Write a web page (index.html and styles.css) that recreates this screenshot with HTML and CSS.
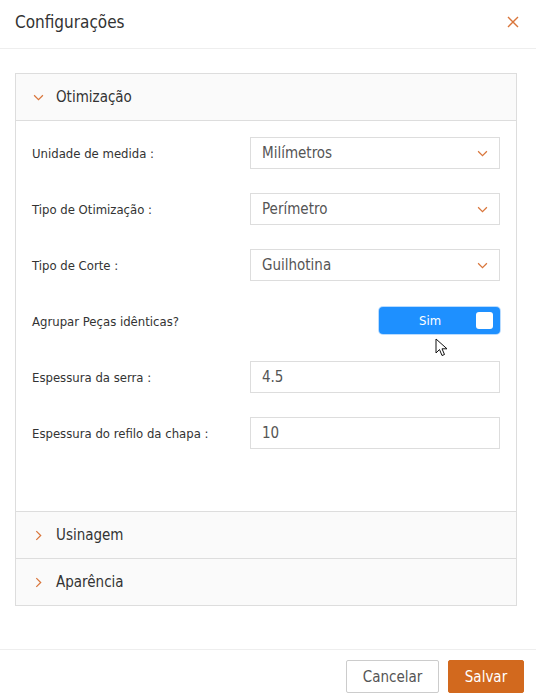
FILE: index.html
```html
<!DOCTYPE html>
<html lang="pt">
<head>
<meta charset="utf-8">
<link rel="stylesheet" href="styles.css">
</head>
<body>
<div class="modal">
  <header class="modal-header">
    <h1 class="title">Configurações</h1>
    <button class="close" aria-label="Fechar">
      <svg width="12" height="12" viewBox="0 0 12 12"><path d="M1 1L11 11M11 1L1 11" stroke="#d9753a" stroke-width="1.4" fill="none"/></svg>
    </button>
  </header>
  <main class="modal-body">
    <div class="accordion">
      <section class="panel open">
        <div class="panel-head">
          <svg class="chev" width="11" height="11" viewBox="0 0 10 10"><path d="M1 3L5 7L9 3" stroke="#d9753a" stroke-width="1.1" fill="none"/></svg>
          <span>Otimização</span>
        </div>
        <div class="panel-body">
          <div class="row">
            <label class="lbl">Unidade de medida :</label>
            <div class="field select"><span>Milímetros</span><svg width="11" height="11" viewBox="0 0 10 10"><path d="M1 3L5 7L9 3" stroke="#d9753a" stroke-width="1.1" fill="none"/></svg></div>
          </div>
          <div class="row">
            <label class="lbl">Tipo de Otimização :</label>
            <div class="field select"><span>Perímetro</span><svg width="11" height="11" viewBox="0 0 10 10"><path d="M1 3L5 7L9 3" stroke="#d9753a" stroke-width="1.1" fill="none"/></svg></div>
          </div>
          <div class="row">
            <label class="lbl">Tipo de Corte :</label>
            <div class="field select"><span>Guilhotina</span><svg width="11" height="11" viewBox="0 0 10 10"><path d="M1 3L5 7L9 3" stroke="#d9753a" stroke-width="1.1" fill="none"/></svg></div>
          </div>
          <div class="row">
            <label class="lbl">Agrupar Peças idênticas?</label>
            <div class="toggle-wrap">
              <div class="toggle"><span class="toggle-text">Sim</span><span class="knob"></span></div>
              <svg class="cursor" width="14" height="20" viewBox="0 0 14 20"><path d="M1 1L1 15L4.5 11.5L7 17.5L9.5 16.5L7 10.8L12 10.8Z" fill="#fff" stroke="#111" stroke-width="1" stroke-linejoin="round"/></svg>
            </div>
          </div>
          <div class="row">
            <label class="lbl">Espessura da serra :</label>
            <div class="field"><span>4.5</span></div>
          </div>
          <div class="row">
            <label class="lbl">Espessura do refilo da chapa :</label>
            <div class="field"><span>10</span></div>
          </div>
        </div>
      </section>
      <section class="panel">
        <div class="panel-head">
          <svg class="chev" width="11" height="11" viewBox="0 0 10 10"><path d="M3 1L7 5L3 9" stroke="#d9753a" stroke-width="1.1" fill="none"/></svg>
          <span>Usinagem</span>
        </div>
      </section>
      <section class="panel">
        <div class="panel-head">
          <svg class="chev" width="11" height="11" viewBox="0 0 10 10"><path d="M3 1L7 5L3 9" stroke="#d9753a" stroke-width="1.1" fill="none"/></svg>
          <span>Aparência</span>
        </div>
      </section>
    </div>
  </main>
  <footer class="modal-footer">
    <button class="btn btn-default">Cancelar</button>
    <button class="btn btn-primary">Salvar</button>
  </footer>
</div>
</body>
</html>
```

FILE: styles.css
```css
* { box-sizing: border-box; }
html, body { margin: 0; padding: 0; background: #fff; }
body {
  font-family: "DejaVu Sans Condensed", "DejaVu Sans", sans-serif;
  color: #333;
  width: 536px;
  height: 698px;
}
.modal { display: flex; flex-direction: column; height: 698px; }
.modal-header {
  height: 49px;
  border-bottom: 1px solid #eee;
  display: flex;
  align-items: center;
  justify-content: space-between;
  padding: 0 17px 5px 15px;
}
.title { margin: 0; font-size: 17px; font-weight: normal; color: #333; }
.close { border: 0; background: none; padding: 0; width: 12px; height: 12px; display: flex; }
.modal-body { flex: 1; padding: 24px 19px 0 15px; }
.accordion { border: 1px solid #ddd; }
.panel + .panel { border-top: 1px solid #ddd; }
.panel-head {
  height: 46px;
  background: #fafafa;
  display: flex;
  align-items: center;
  padding-left: 17px;
  font-size: 15px;
  color: #333;
}
.panel-head .chev { margin-right: 12px; }
.panel.open .panel-head { height: 47px; border-bottom: 1px solid #ddd; }
.panel-body { padding: 16px 16px 62px 16px; display: flex; flex-direction: column; gap: 24px; }
.row { display: flex; align-items: center; justify-content: space-between; height: 32px; }
.lbl { font-size: 13px; color: #333; }
.field {
  width: 250px;
  height: 32px;
  border: 1px solid #ddd;
  display: flex;
  align-items: center;
  justify-content: space-between;
  padding: 0 11px 0 11px;
  font-size: 15px;
  color: #555;
}
.toggle-wrap { position: relative; margin-top: -2px; }
.toggle {
  width: 121px;
  height: 27px;
  border-radius: 4px;
  background: #1e90ff;
  box-shadow: 0 0 0 1px #b9dcff;
  display: flex;
  align-items: center;
  justify-content: center;
  position: relative;
  color: #fff;
  font-size: 13px;
}
.toggle-text { margin-right: 19px; }
.knob {
  position: absolute;
  right: 7px;
  top: 5px;
  width: 17px;
  height: 17px;
  background: #fff;
  border-radius: 3px;
}
.cursor { position: absolute; left: 56px; top: 31px; }
.modal-footer {
  height: 49px;
  border-top: 1px solid #eee;
  display: flex;
  justify-content: flex-end;
  align-items: flex-start;
  gap: 9px;
  padding: 10px 12px 0 0;
}
.btn {
  height: 33px;
  font-family: inherit;
  font-size: 15px;
  border-radius: 2px;
  padding: 0;
}
.btn-default { background: #fff; border: 1px solid #ccc; color: #555; width: 93px; }
.btn-primary { background: #d2691e; border: 1px solid #d2691e; color: #fff; width: 76px; }
```
